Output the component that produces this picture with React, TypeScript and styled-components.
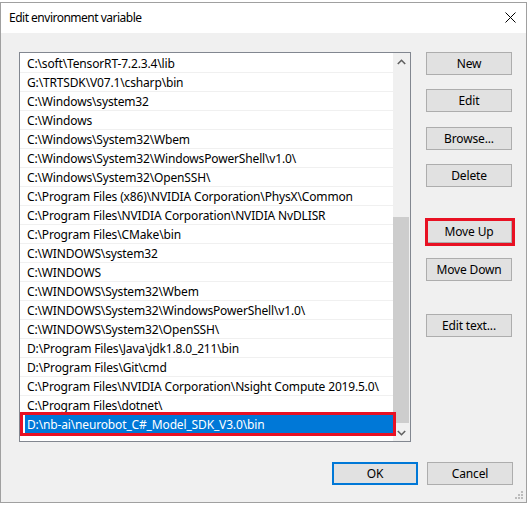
import React from "react";
import styled, { createGlobalStyle } from "styled-components";

const GlobalStyle = createGlobalStyle`
  html, body { margin: 0; padding: 0; background: #ffffff; }
  body { font-family: "Noto Sans", "Segoe UI", sans-serif; font-size: 12px; color: #000; }
  * { box-sizing: border-box; }
`;

const Window = styled.div`
  position: relative;
  margin-top: 2px;
  width: 527px;
  height: 501px;
  border: 1px solid #a0a0a0;
  display: flex;
  flex-direction: column;
  background: #f0f0f0;
`;

const TitleBar = styled.div`
  height: 30px;
  background: #ffffff;
  display: flex;
  align-items: center;
  justify-content: space-between;
  padding: 0 10px 1px 8px;
`;

const Title = styled.span`
  font-size: 12px;
  letter-spacing: -0.5px;
  color: #000;
`;

const CloseBtn = styled.div`
  width: 12px;
  height: 12px;
  display: flex;
  align-items: center;
  justify-content: center;
`;

const Body = styled.div`
  flex: 1;
  display: flex;
  flex-direction: column;
  padding: 19px 13px 0 18px;
`;

const Main = styled.div`
  display: flex;
  gap: 15px;
`;

const ListBox = styled.div`
  width: 392px;
  height: 390px;
  border: 1px solid #828790;
  background: #ffffff;
  display: flex;
`;

const Rows = styled.div`
  flex: 1;
  display: flex;
  flex-direction: column;
  padding-top: 1px;
`;

const Row = styled.div<{ $selected?: boolean }>`
  position: relative;
  height: 19px;
  flex: none;
  padding: 1px 0 0 7px;
  line-height: 17px;
  white-space: nowrap;
  overflow: visible;
  letter-spacing: -0.15px;
  border-bottom: 1px solid #f0f0f0;
  color: ${(p) => (p.$selected ? "#ffffff" : "#000000")};
  background: ${(p) => (p.$selected ? "#0078d7" : "transparent")};
  box-shadow: ${(p) => (p.$selected ? "inset 5px 0 0 #ffffff" : "none")};
  ${(p) =>
    p.$selected
      ? `
    border-bottom-color: #0078d7;
    &::after {
      content: "";
      position: absolute;
      left: 0;
      right: -3px;
      top: -3px;
      bottom: -3px;
      border: 3px solid #e81123;
      z-index: 2;
    }
  `
      : ""}
`;

const ScrollBar = styled.div`
  width: 17px;
  background: #f0f0f0;
  display: flex;
  flex-direction: column;
`;

const ArrowBtn = styled.div`
  height: 17px;
  display: flex;
  align-items: center;
  justify-content: center;
`;

const Track = styled.div`
  flex: 1;
  display: flex;
  flex-direction: column;
  padding: 0 1px 1px 0;
`;

const Thumb = styled.div`
  margin-top: auto;
  height: 206px;
  background: #cdcdcd;
`;

const ButtonCol = styled.div`
  display: flex;
  flex-direction: column;
`;

const Button = styled.div<{ $gap?: number; $focused?: boolean; $highlight?: boolean }>`
  position: relative;
  width: 86px;
  height: 23px;
  margin-top: ${(p) => p.$gap ?? 0}px;
  background: #e1e1e1;
  border: ${(p) => (p.$focused ? "2px solid #0078d7" : "1px solid #adadad")};
  display: flex;
  align-items: center;
  justify-content: center;
  font-size: 12px;
  letter-spacing: -0.15px;
  color: #000;
  ${(p) =>
    p.$highlight
      ? `
    &::after {
      content: "";
      position: absolute;
      left: -2px;
      right: -4px;
      top: -3px;
      bottom: -4px;
      border: 3px solid #e81123;
    }
  `
      : ""}
`;

const Footer = styled.div`
  display: flex;
  justify-content: flex-end;
  gap: 9px;
  margin-top: 20px;
`;

const Gripper = styled.svg`
  position: absolute;
  right: 3px;
  bottom: 3px;
`;

const paths = [
  "C:\\soft\\TensorRT-7.2.3.4\\lib",
  "G:\\TRTSDK\\V07.1\\csharp\\bin",
  "C:\\Windows\\system32",
  "C:\\Windows",
  "C:\\Windows\\System32\\Wbem",
  "C:\\Windows\\System32\\WindowsPowerShell\\v1.0\\",
  "C:\\Windows\\System32\\OpenSSH\\",
  "C:\\Program Files (x86)\\NVIDIA Corporation\\PhysX\\Common",
  "C:\\Program Files\\NVIDIA Corporation\\NVIDIA NvDLISR",
  "C:\\Program Files\\CMake\\bin",
  "C:\\WINDOWS\\system32",
  "C:\\WINDOWS",
  "C:\\WINDOWS\\System32\\Wbem",
  "C:\\WINDOWS\\System32\\WindowsPowerShell\\v1.0\\",
  "C:\\WINDOWS\\System32\\OpenSSH\\",
  "D:\\Program Files\\Java\\jdk1.8.0_211\\bin",
  "D:\\Program Files\\Git\\cmd",
  "C:\\Program Files\\NVIDIA Corporation\\Nsight Compute 2019.5.0\\",
  "C:\\Program Files\\dotnet\\",
  "D:\\nb-ai\\neurobot_C#_Model_SDK_V3.0\\bin",
];

export default function App() {
  return (
    <>
      <GlobalStyle />
      <Window>
        <TitleBar>
          <Title>Edit environment variable</Title>
          <CloseBtn>
            <svg width="11" height="11" viewBox="0 0 11 11">
              <path d="M0.5 0.5 L10.5 10.5 M10.5 0.5 L0.5 10.5" stroke="#000" strokeWidth="1" fill="none" />
            </svg>
          </CloseBtn>
        </TitleBar>
        <Body>
          <Main>
            <ListBox>
              <Rows>
                {paths.map((p, i) => (
                  <Row key={i} $selected={i === paths.length - 1}>
                    {p}
                  </Row>
                ))}
              </Rows>
              <ScrollBar>
                <ArrowBtn>
                  <svg width="9" height="6" viewBox="0 0 9 6">
                    <path d="M0.8 5 L4.5 1.3 L8.2 5" stroke="#606060" strokeWidth="1.6" fill="none" />
                  </svg>
                </ArrowBtn>
                <Track>
                  <Thumb />
                </Track>
                <ArrowBtn>
                  <svg width="9" height="6" viewBox="0 0 9 6">
                    <path d="M0.8 1 L4.5 4.7 L8.2 1" stroke="#606060" strokeWidth="1.6" fill="none" />
                  </svg>
                </ArrowBtn>
              </ScrollBar>
            </ListBox>
            <ButtonCol>
              <Button>New</Button>
              <Button $gap={14}>Edit</Button>
              <Button $gap={15}>Browse...</Button>
              <Button $gap={14}>Delete</Button>
              <Button $gap={33} $highlight>Move Up</Button>
              <Button $gap={15}>Move Down</Button>
              <Button $gap={33}>Edit text...</Button>
            </ButtonCol>
          </Main>
          <Footer>
            <Button $focused>OK</Button>
            <Button>Cancel</Button>
          </Footer>
        </Body>
        <Gripper width="8" height="8" viewBox="0 0 8 8">
          {[
            [6, 0],
            [3, 3],
            [6, 3],
            [0, 6],
            [3, 6],
            [6, 6],
          ].map(([x, y], i) => (
            <rect key={i} x={x} y={y} width="2" height="2" fill="#bcbcbc" />
          ))}
        </Gripper>
      </Window>
    </>
  );
}
